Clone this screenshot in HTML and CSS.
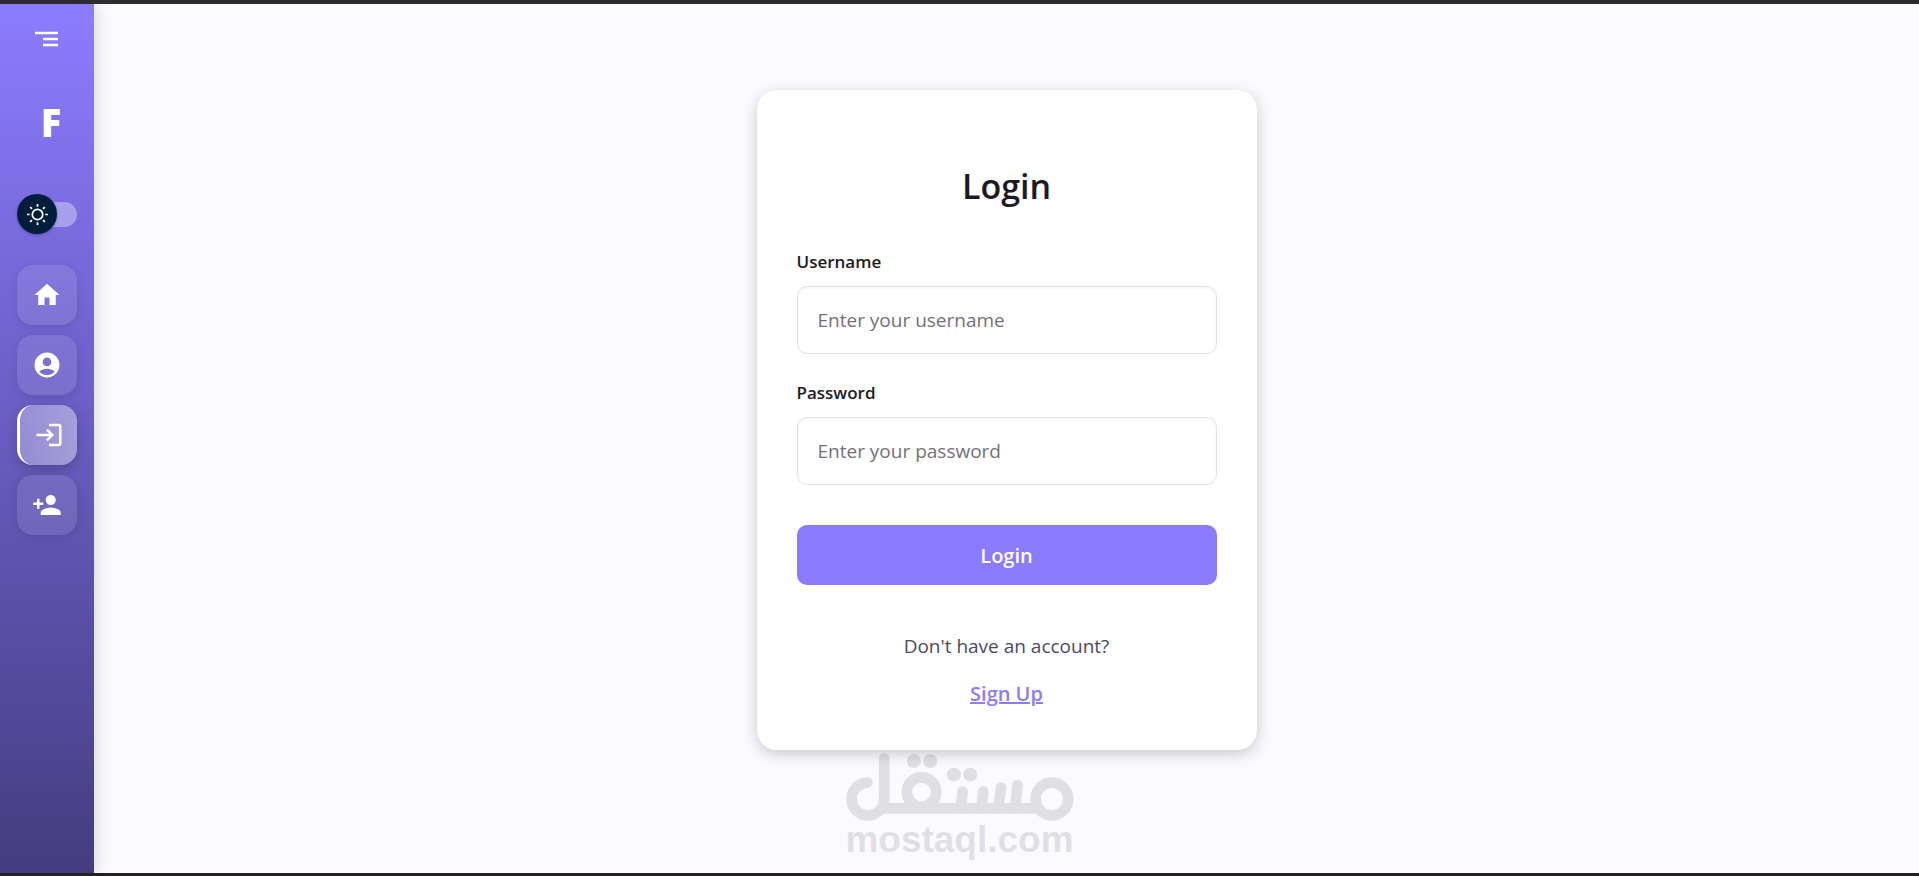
FILE: index.html
```html
<!DOCTYPE html>
<html lang="en">
<head>
    <meta charset="UTF-8">
    <meta name="viewport" content="width=device-width, initial-scale=1.0">
    <title>Login</title>
    <link rel="stylesheet" href="styles.css">
</head>
<body>
    <aside class="sidebar">
        <button class="menu-button" type="button" aria-label="Toggle menu">
            <svg viewBox="0 0 24 16"><path d="M0 2h23M8 8h15M8 14h15"/></svg>
        </button>

        <div class="logo">F</div>

        <label class="theme-switch">
            <input type="checkbox" aria-label="Dark theme">
            <span class="thumb">
                <svg viewBox="0 0 20 20"><path d="M9.305 1.667V3.75h1.389V1.667h-1.39zm-4.707 1.95l-.982.982L5.09 6.072l.982-.982-1.473-1.473zm10.802 0L13.927 5.09l.982.982 1.473-1.473-.982-.982zM10 5.139a4.872 4.872 0 00-4.862 4.86A4.872 4.872 0 0010 14.862 4.872 4.872 0 0014.86 10 4.872 4.872 0 0010 5.139zm0 1.389A3.462 3.462 0 0113.471 10a3.462 3.462 0 01-3.473 3.472A3.462 3.462 0 016.527 10 3.462 3.462 0 0110 6.528zM1.665 9.305v1.39h2.083v-1.39H1.666zm14.583 0v1.39h2.084v-1.39h-2.084zM5.09 13.928L3.616 15.4l.982.982 1.473-1.473-.982-.982zm9.82 0l-.982.982 1.473 1.473.982-.982-1.473-1.473zM9.305 16.25v2.083h1.389V16.25h-1.39z"/></svg>
            </span>
        </label>

        <nav class="nav">
            <a class="nav-item" href="#home" aria-label="Home">
                <svg viewBox="0 0 24 24"><path d="M10 20v-6h4v6h5v-8h3L12 3 2 12h3v8z"/></svg>
            </a>
            <a class="nav-item" href="#profile" aria-label="Profile">
                <svg viewBox="0 0 24 24"><path d="M12 2C6.48 2 2 6.48 2 12s4.48 10 10 10 10-4.48 10-10S17.52 2 12 2zm0 4c1.93 0 3.5 1.57 3.5 3.5S13.93 13 12 13s-3.5-1.57-3.5-3.5S10.07 6 12 6zm0 14c-2.03 0-4.43-.82-6.14-2.88C7.55 15.8 9.68 15 12 15s4.45.8 6.14 2.12C16.43 19.18 14.03 20 12 20z"/></svg>
            </a>
            <a class="nav-item active" href="#login" aria-label="Login">
                <svg viewBox="0 0 24 24"><path d="M11 7 9.600 8.400l2.600 2.600H2v2h10.200l-2.600 2.600L11 17l5-5zm9 12h-8v2h8c1.100 0 2-.9 2-2V5c0-1.100-.9-2-2-2h-8v2h8z"/></svg>
            </a>
            <a class="nav-item" href="#signup" aria-label="Sign up">
                <svg viewBox="0 0 24 24"><path d="M15 12c2.210 0 4-1.790 4-4s-1.790-4-4-4-4 1.790-4 4 1.790 4 4 4zm-9-2V7H4v3H1v2h3v3h2v-3h3v-2zm9 4c-2.670 0-8 1.340-8 4v2h16v-2c0-2.660-5.330-4-8-4z"/></svg>
            </a>
        </nav>
    </aside>

    <main class="content">
        <form class="card">
            <h1>Login</h1>

            <div class="field">
                <label for="username">Username</label>
                <input type="text" id="username" placeholder="Enter your username">
            </div>
            <div class="field">
                <label for="password">Password</label>
                <input type="password" id="password" placeholder="Enter your password">
            </div>

            <button class="submit-button" type="submit">Login</button>

            <div class="card-footer">
                <p>Don't have an account?</p>
                <a href="#signup">Sign Up</a>
            </div>
        </form>
    </main>

    <div class="watermark">
        <svg viewBox="0 0 684 204" role="img" aria-label="مستقل">
            <g fill="none" stroke="#000" stroke-width="32" stroke-linecap="round">
                <path d="M65 89a49 49 0 1 0 50 49V16"/>
                <path d="M118 166H572"/>
                <circle cx="227" cy="117" r="44"/>
                <circle cx="618" cy="138" r="49"/>
                <path d="M350 116l-5 50M412 116l-5 50M465 104l-7 62M515 96l-8 70"/>
            </g>
            <circle cx="204" cy="24" r="21"/>
            <circle cx="253" cy="24" r="21"/>
            <circle cx="324" cy="65" r="21"/>
            <circle cx="373" cy="65" r="21"/>
        </svg>
        <span>mostaql.com</span>
    </div>
</body>
</html>
```
FILE: styles.css
```css
* {
    box-sizing: border-box;
}

body {
    margin: 0;
    min-height: 100vh;
    display: flex;
    position: relative;
    background: #fbfaff;
    border-top: 4px solid #2e2c30;
    border-bottom: 3px solid #232126;
    color: #1b1a24;
    font-family: 'Segoe UI', 'Open Sans', 'Noto Sans', sans-serif;
}

/* Sidebar */
.sidebar {
    width: 94px;
    flex-shrink: 0;
    display: flex;
    flex-direction: column;
    align-items: center;
    padding-top: 23px;
    background: linear-gradient(180deg, #8c7cff 0%, #453c80 100%);
    box-shadow: 2px 0 15px rgba(0,0,0,0.15);
}

.menu-button {
    display: flex;
    padding: 4px;
    border: none;
    background: none;
    cursor: pointer;
}

.menu-button svg {
    width: 24px;
    height: 16px;
    fill: none;
    stroke: #fff;
    stroke-width: 2.4;
}

.logo {
    margin-top: 43px;
    padding-left: 8px;
    font-size: 38px;
    font-weight: 800;
    line-height: 56px;
    color: #fff;
}

.theme-switch {
    width: 60px;
    height: 40px;
    margin-top: 44px;
    display: flex;
    align-items: center;
    position: relative;
    cursor: pointer;
}

.theme-switch input {
    appearance: none;
    width: 100%;
    height: 25px;
    margin: 0;
    border-radius: 13px;
    background: #a99fec;
    cursor: pointer;
}

.thumb {
    position: absolute;
    left: 0;
    top: 0;
    width: 40px;
    height: 40px;
    display: flex;
    align-items: center;
    justify-content: center;
    border-radius: 50%;
    background: #001e3c;
    box-shadow: 0 1px 3px rgba(0,0,0,0.3);
    transition: 0.3s;
}

.theme-switch input:checked + .thumb {
    transform: translateX(20px);
}

.thumb svg {
    width: 25px;
    height: 25px;
    fill: #fff;
}

.nav {
    display: flex;
    flex-direction: column;
    gap: 10px;
    margin-top: 31px;
}

.nav-item {
    width: 60px;
    height: 60px;
    display: flex;
    align-items: center;
    justify-content: center;
    border-radius: 16px;
    background: rgba(255,255,255,0.1);
    box-shadow: 0 2px 8px rgba(0,0,0,0.1);
    transition: 0.3s;
}

.nav-item svg {
    width: 30px;
    height: 30px;
    fill: #fff;
}

.nav-item:hover {
    background: rgba(255,255,255,0.2);
}

.nav-item.active {
    border-left: 3px solid #fff;
    background: linear-gradient(90deg, rgba(255,255,255,0.3), rgba(255,255,255,0.4));
    box-shadow: 0 4px 12px rgba(0,0,0,0.2);
}

/* Login card */
.content {
    flex: 1;
    display: flex;
    justify-content: center;
    align-items: flex-start;
    padding: 86px 20px 20px;
}

.card {
    width: 100%;
    max-width: 500px;
    padding: 72px 40px 42px;
    border-radius: 20px;
    background: #fff;
    box-shadow: 0 4px 15px rgba(0,0,0,0.2);
}

.card h1 {
    margin: 0 0 40px;
    font-size: 34px;
    font-weight: 600;
    line-height: 48px;
    text-align: center;
}

.field {
    margin-bottom: 27px;
}

.field label {
    display: block;
    margin-bottom: 12px;
    font-size: 17px;
    font-weight: 600;
    line-height: 24px;
}

.field input {
    width: 100%;
    height: 68px;
    padding: 0 20px;
    border: 1px solid #e2e1e8;
    border-radius: 10px;
    background: #fff;
    box-shadow: inset 0 1px 3px rgba(0,0,0,0.05);
    font: inherit;
    font-size: 19px;
    color: inherit;
}

.field input::placeholder {
    color: #757079;
}

.submit-button {
    width: 100%;
    height: 60px;
    margin-top: 13px;
    border: none;
    border-radius: 10px;
    background: #8b7cff;
    color: #fff;
    font: inherit;
    font-size: 20px;
    font-weight: 600;
    cursor: pointer;
}

.card-footer {
    margin-top: 48px;
    font-size: 19px;
    line-height: 27px;
    text-align: center;
}

.card-footer p {
    margin: 0 0 20px;
    color: #4d4a60;
}

.card-footer a {
    color: #8b7cff;
    font-size: 20px;
    font-weight: 600;
    text-decoration: underline;
    text-decoration-thickness: 2px;
}

/* Watermark lies over the page */
.watermark {
    position: absolute;
    bottom: 14px;
    left: 50%;
    transform: translateX(-50%);
    display: flex;
    flex-direction: column;
    align-items: center;
    opacity: 0.1;
    pointer-events: none;
    color: #000;
}

.watermark svg {
    width: 228px;
    height: 68px;
}

.watermark span {
    font-family: 'Liberation Sans', Arial, sans-serif;
    font-size: 37px;
    font-weight: bold;
    line-height: 38px;
}
```
